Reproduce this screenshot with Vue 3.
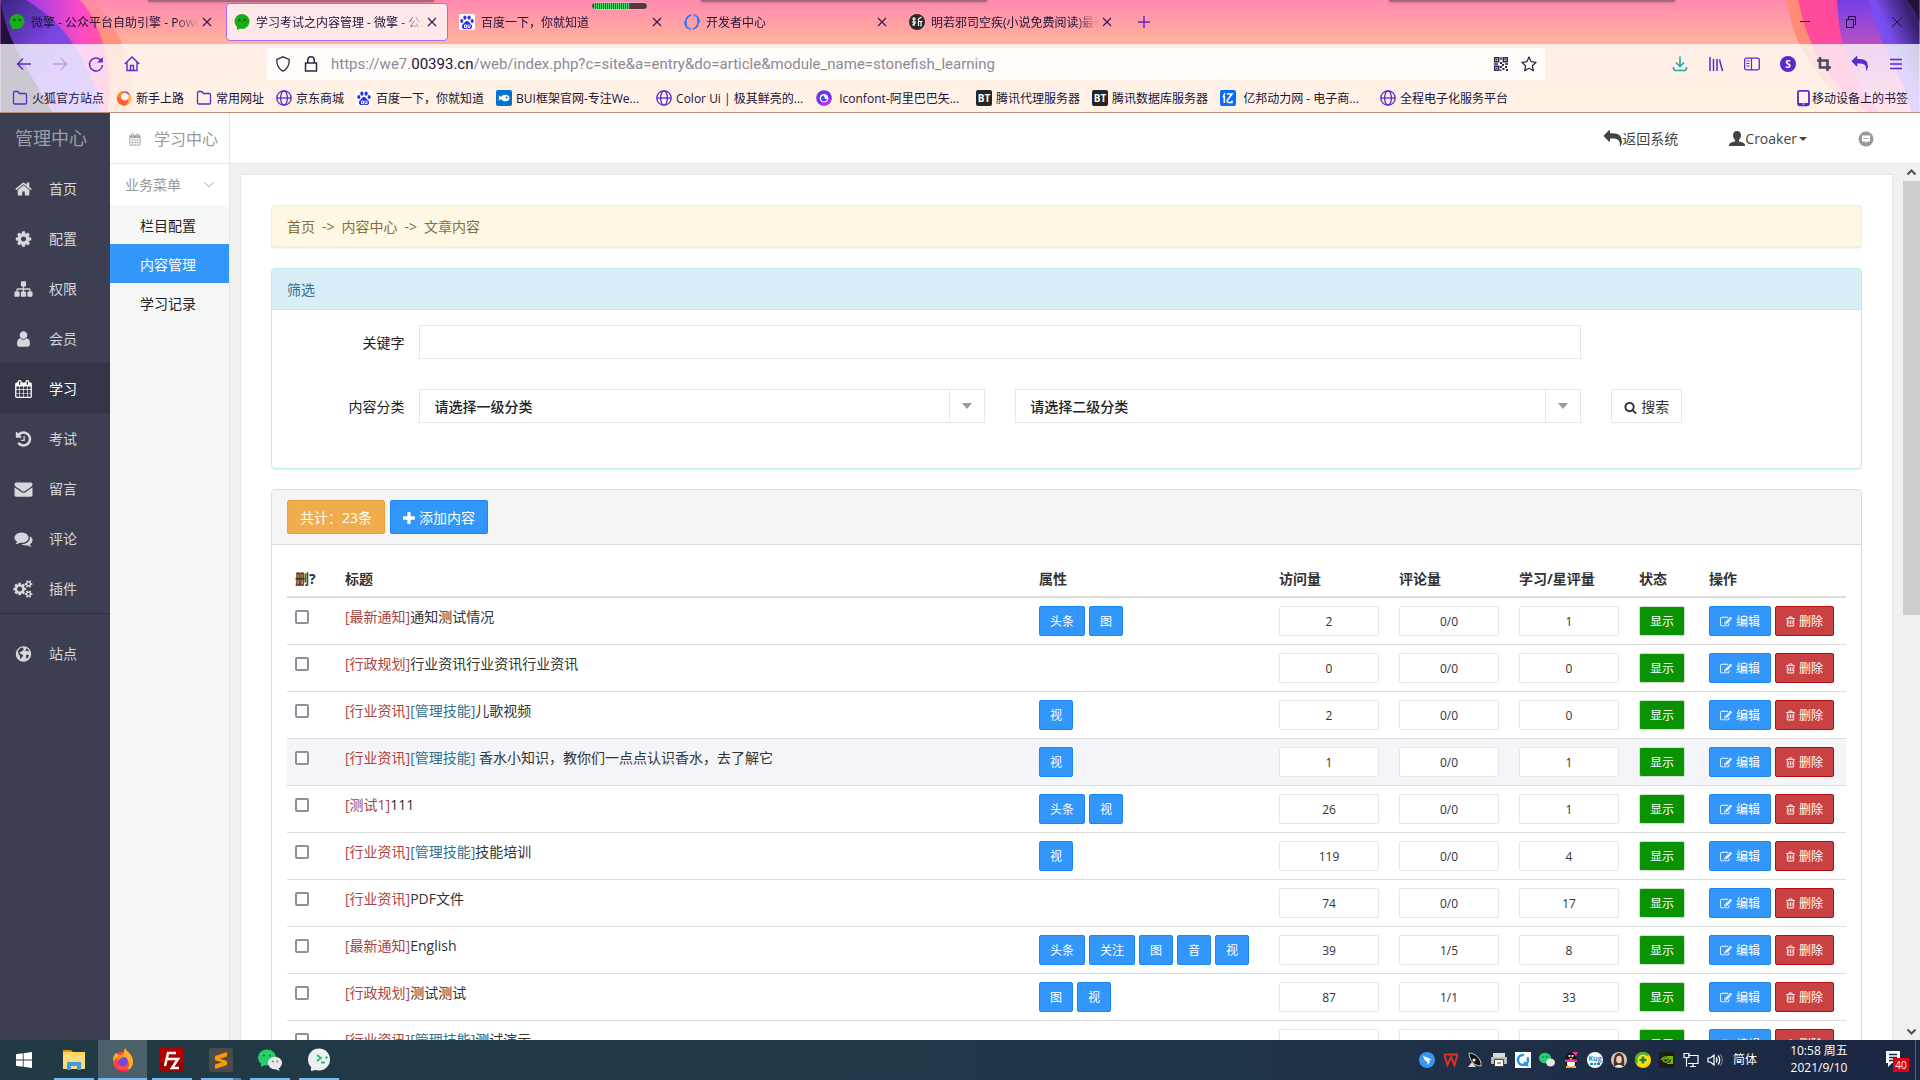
<script setup>
import { ref } from 'vue'

const fa = {
  home: 'M1472 992v480q0 26-19 45t-45 19h-384v-384h-256v384h-384q-26 0-45-19t-19-45v-480q0-1 .5-3t.5-3l575-474 575 474q1 2 1 6zm223-69l-62 74q-8 9-21 11h-3q-13 0-21-7l-692-577-692 577q-12 8-24 7-13-2-21-11l-62-74q-8-10-7-23.5t11-21.5l719-599q32-26 76-26t76 26l244 204v-195q0-14 9-23t23-9h192q14 0 23 9t9 23v408l219 182q10 8 11 21.5t-7 23.5z',
  cog: 'M1152 896q0-106-75-181t-181-75-181 75-75 181 75 181 181 75 181-75 75-181zm512-109v222q0 12-8 23t-20 13l-185 28q-19 54-39 91 35 50 107 138 10 12 10 25t-9 23q-27 37-99 108t-94 71q-12 0-26-9l-138-108q-44 23-91 38-16 136-29 186-7 28-36 28h-222q-14 0-24.5-8.5t-11.5-21.5l-28-184q-49-16-90-37l-141 107q-10 9-25 9-14 0-25-11-126-114-165-168-7-10-7-23 0-12 8-23 15-21 51-66.5t54-70.5q-27-50-41-99l-183-27q-13-2-21-12.5t-8-23.5v-222q0-12 8-23t19-13l186-28q14-46 39-92-40-57-107-138-10-12-10-24 0-10 9-23 26-36 98.5-107.5t94.5-71.5q13 0 26 10l138 107q44-23 91-38 16-136 29-186 7-28 36-28h222q14 0 24.5 8.5t11.5 21.5l28 184q49 16 90 37l142-107q9-9 24-9 13 0 25 10 129 119 165 170 7 8 7 22 0 12-8 23-15 21-51 66.5t-54 70.5q26 50 41 98l183 28q13 2 21 12.5t8 23.5z',
  sitemap: 'M1792 1248v320q0 40-28 68t-68 28h-320q-40 0-68-28t-28-68v-320q0-40 28-68t68-28h96v-192h-512v192h96q40 0 68 28t28 68v320q0 40-28 68t-68 28h-320q-40 0-68-28t-28-68v-320q0-40 28-68t68-28h96v-192h-512v192h96q40 0 68 28t28 68v320q0 40-28 68t-68 28h-320q-40 0-68-28t-28-68v-320q0-40 28-68t68-28h96v-192q0-52 38-90t90-38h512v-192h-96q-40 0-68-28t-28-68v-320q0-40 28-68t68-28h320q40 0 68 28t28 68v320q0 40-28 68t-68 28h-96v192h512q52 0 90 38t38 90v192h96q40 0 68 28t28 68z',
  user: 'M1536 1399q0 109-62.5 187t-150.5 78h-854q-88 0-150.5-78t-62.5-187q0-85 8.5-160.5t31.5-152 58.5-131 94-89 134.5-34.5q131 128 313 128t313-128q76 0 134.5 34.5t94 89 58.5 131 31.5 152 8.5 160.5zm-256-887q0 159-112.5 271.5t-271.5 112.5-271.5-112.5-112.5-271.5 112.5-271.5 271.5-112.5 271.5 112.5 112.5 271.5z',
  calendar: 'M192 1664h288v-288h-288v288zm352 0h320v-288h-320v288zm-352-352h288v-320h-288v320zm352 0h320v-320h-320v320zm-352-384h288v-288h-288v288zm736 736h320v-288h-320v288zm-384-736h320v-288h-320v288zm768 736h288v-288h-288v288zm-384-352h320v-320h-320v320zm-352-864v-288q0-13-9.5-22.5t-22.5-9.5h-64q-13 0-22.5 9.5t-9.5 22.5v288q0 13 9.5 22.5t22.5 9.5h64q13 0 22.5-9.5t9.5-22.5zm736 864h288v-320h-288v320zm-384-384h320v-288h-320v288zm384 0h288v-288h-288v288zm32-480v-288q0-13-9.5-22.5t-22.5-9.5h-64q-13 0-22.5 9.5t-9.5 22.5v288q0 13 9.5 22.5t22.5 9.5h64q13 0 22.5-9.5t9.5-22.5zm384-64v1280q0 52-38 90t-90 38h-1408q-52 0-90-38t-38-90v-1280q0-52 38-90t90-38h128v-96q0-66 47-113t113-47h64q66 0 113 47t47 113v96h384v-96q0-66 47-113t113-47h64q66 0 113 47t47 113v96h128q52 0 90 38t38 90z',
  history: 'M1664 896q0 156-61 298t-164 245-245 164-298 61q-172 0-327-72.5t-264-204.5q-7-10-6.5-22.5t8.5-20.5l137-138q10-9 25-9 16 2 23 12 73 95 179 147t225 52q104 0 198.5-40.5t163.5-109.5 109.5-163.5 40.5-198.5-40.5-198.5-109.5-163.5-163.5-109.5-198.5-40.5q-98 0-188 35.5t-160 101.5l137 138q31 30 14 69-17 40-59 40h-448q-26 0-45-19t-19-45v-448q0-42 40-59 39-17 69 14l130 129q107-101 244.5-156.5t284.5-55.5q156 0 298 61t245 164 164 245 61 298zm-640-288v448q0 14-9 23t-23 9h-320q-14 0-23-9t-9-23v-64q0-14 9-23t23-9h224v-352q0-14 9-23t23-9h64q14 0 23 9t9 23z',
  envelope: 'M1792 710v794q0 66-47 113t-113 47h-1472q-66 0-113-47t-47-113v-794q44 49 101 87 362 246 497 345 57 42 92.5 65.5t94.5 48 110 24.5h2q51 0 110-24.5t94.5-48 92.5-65.5q170-123 498-345 57-39 100-87zm0-294q0 79-49 151t-122 123q-376 261-468 325-10 7-42.5 30.5t-54 38-52 32.5-57.5 27-50 9h-2q-23 0-50-9t-57.5-27-52-32.5-54-38-42.5-30.5q-91-64-262-182.5t-205-142.5q-62-42-117-115.5t-55-136.5q0-78 41.5-130t118.5-52h1472q65 0 112.5 47t47.5 113z',
  comments: 'M1408 768q0 139-94 257t-256.5 186.5-353.5 68.5q-86 0-176-16-124 88-278 128-36 9-86 16h-3q-11 0-20.5-8t-11.5-21q-1-3-1-6.5t.5-6.5 2-6l2.5-5 3.5-5.5 4-5 4.5-5 4-4.5q5-6 23-25t26-29.5 22.5-29 25-38.5 20.5-44q-124-72-195-177t-71-224q0-139 94-257t256.5-186.5 353.5-68.5 353.5 68.5 256.5 186.5 94 257zm384 256q0 120-71 224.5t-195 176.5q10 24 20.5 44t25 38.5 22.5 29 26 29.5 23 25q1 1 4 4.5t4.5 5 4 5 3.5 5.5l2.5 5 2 6 .5 6.5-1 6.5q-3 14-13 22t-22 7q-50-7-86-16-154-40-278-128-90 16-176 16-271 0-472-132 58 4 88 4 161 0 309-45t264-129q125-92 192-212t67-254q0-77-23-152 129 71 204 178t75 230z',
  cogs: 'M832 896q0-106-75-181t-181-75-181 75-75 181 75 181 181 75 181-75 75-181zm768 512q0-52-38-90t-90-38-90 38-38 90q0 53 37.5 90.5t90.5 37.5 90.5-37.5 37.5-90.5zm0-1024q0-52-38-90t-90-38-90 38-38 90q0 53 37.5 90.5t90.5 37.5 90.5-37.5 37.5-90.5zm-384 421v185q0 10-7 19.5t-16 10.5l-155 24q-11 35-32 76 34 48 90 115 7 11 7 20 0 12-7 19-23 30-82.5 89.5t-78.5 59.5q-11 0-21-7l-115-90q-37 19-77 31-11 108-23 155-7 24-30 24h-186q-11 0-20-7.5t-10-17.5l-23-153q-34-10-75-31l-118 89q-7 7-20 7-11 0-21-8-144-133-144-160 0-9 7-19 10-14 41-53t47-61q-23-44-35-82l-152-24q-10-1-17-9.5t-7-19.5v-185q0-10 7-19.5t16-10.5l155-24q11-35 32-76-34-48-90-115-7-11-7-20 0-12 7-20 22-30 82-89t79-59q11 0 21 7l115 90q34-18 77-32 11-108 23-154 7-24 30-24h186q11 0 20 7.5t10 17.5l23 153q34 10 75 31l118-89q8-7 20-7 11 0 21 8 144 133 144 160 0 8-7 19-12 16-42 54t-45 60q23 48 34 82l152 23q10 2 17 10.5t7 19.5zm640 533v140q0 16-149 31-12 27-30 52 51 113 51 138 0 4-4 7-122 71-124 71-8 0-46-47t-52-68q-20 2-30 2t-30-2q-14 21-52 68t-46 47q-2 0-124-71-4-3-4-7 0-25 51-138-18-25-30-52-149-15-149-31v-140q0-16 149-31 13-29 30-52-51-113-51-138 0-4 4-7 4-2 35-20t59-34 30-16q8 0 46 46.5t52 67.5q20-2 30-2t30 2q51-71 92-112l6-2q4 0 124 70 4 3 4 7 0 25-51 138 17 23 30 52 149 15 149 31zm0-1024v140q0 16-149 31-12 27-30 52 51 113 51 138 0 4-4 7-122 71-124 71-8 0-46-47t-52-68q-20 2-30 2t-30-2q-14 21-52 68t-46 47q-2 0-124-71-4-3-4-7 0-25 51-138-18-25-30-52-149-15-149-31v-140q0-16 149-31 13-29 30-52-51-113-51-138 0-4 4-7 4-2 35-20t59-34 30-16q8 0 46 46.5t52 67.5q20-2 30-2t30 2q51-71 92-112l6-2q4 0 124 70 4 3 4 7 0 25-51 138 17 23 30 52 149 15 149 31z',
  globe: 'M896 128a768 768 0 1 0 0 1536a768 768 0 1 0 0-1536zM560 330L760 250L900 290L840 400L940 450L830 560L700 610L620 720L540 690L480 760L560 860L700 900L860 1010L800 1180L700 1250L640 1430L560 1300L520 1060L400 900L340 700L400 480zM1130 300L1330 420L1450 580L1380 640L1260 560L1150 620L1060 540L1180 440zM1130 1010L1300 940L1440 1010L1380 1210L1200 1370L1120 1240L1180 1130z',
  reply: 'M1792 1120q0 166-127 451-3 7-10.5 24t-13.5 30-13 22q-12 17-28 17-15 0-23.5-10t-8.5-25q0-9 2.5-26.5t2.5-23.5q5-68 5-123 0-112-19.5-200.5t-54-153.5-89-112-117-77.5-142-46-158.5-21.5-178-6h-224v256q0 26-19 45t-45 19-45-19l-512-512q-19-19-19-45t19-45l512-512q19-19 45-19t45 19 19 45v256h224q713 0 875 403 53 134 53 333z',
  search: 'M1216 832q0-185-131.5-316.5t-316.5-131.5-316.5 131.5-131.5 316.5 131.5 316.5 316.5 131.5 316.5-131.5 131.5-316.5zm512 832q0 52-38 90t-90 38q-54 0-90-38l-343-342q-179 124-399 124-143 0-273.5-55.5t-225-150-150-225-55.5-273.5 55.5-273.5 150-225 225-150 273.5-55.5 273.5 55.5 225 150 150 225 55.5 273.5q0 220-124 399l343 343q37 37 37 90z',
  plus: 'M1600 736v192q0 40-28 68t-68 28h-416v416q0 40-28 68t-68 28h-192q-40 0-68-28t-28-68v-416h-416q-40 0-68-28t-28-68v-192q0-40 28-68t68-28h416v-416q0-40 28-68t68-28h192q40 0 68 28t28 68v416h416q40 0 68 28t28 68z',
  edit: 'M888 1184l116-116-152-152-116 116v56h96v96h56zm440-720q-16-16-33 1l-350 350q-17 17-1 33t33-1l350-350q17-17 1-33zm80 594v190q0 119-84.5 203.5t-203.5 84.5h-832q-119 0-203.5-84.5t-84.5-203.5v-832q0-119 84.5-203.5t203.5-84.5h832q63 0 117 25 15 7 18 23 3 17-9 29l-49 49q-14 14-32 8-23-6-45-6h-832q-66 0-113 47t-47 113v832q0 66 47 113t113 47h832q66 0 113-47t47-113v-126q0-13 9-22l64-64q15-15 35-7t20 29zm-96-738l288 288-672 672h-288v-288zm444 132l-92 92-288-288 92-92q28-28 68-28t68 28l152 152q28 28 28 68t-28 68z',
  trash: 'M704 736v576q0 14-9 23t-23 9h-64q-14 0-23-9t-9-23v-576q0-14 9-23t23-9h64q14 0 23 9t9 23zm256 0v576q0 14-9 23t-23 9h-64q-14 0-23-9t-9-23v-576q0-14 9-23t23-9h64q14 0 23 9t9 23zm256 0v576q0 14-9 23t-23 9h-64q-14 0-23-9t-9-23v-576q0-14 9-23t23-9h64q14 0 23 9t9 23zm128 724v-948h-896v948q0 22 7 40.5t14.5 27 10.5 8.5h832q3 0 10.5-8.5t14.5-27 7-40.5zm-672-1076h448l-48-117q-7-9-17-11h-317q-10 2-17 11zm928 32v64q0 14-9 23t-23 9h-96v948q0 83-47 143.5t-113 60.5h-832q-66 0-113-58.5t-47-141.5v-952h-96q-14 0-23-9t-9-23v-64q0-14 9-23t23-9h309l70-167q15-37 54-63t79-26h320q40 0 79 26t54 63l70 167h309q14 0 23 9t9 23z',
}

/* 16x16 artwork shared by tabs, bookmarks and the tray */
const art = {
  we7: '<circle cx="8" cy="7.5" r="7.5" fill="#1aad19"/><path d="M3 12l0 4 4-2z" fill="#1aad19"/><circle cx="5.300" cy="6" r="1.300" fill="#0b5d0b"/><circle cx="10.700" cy="6" r="1.300" fill="#0b5d0b"/>',
  baidu: '<rect width="16" height="16" rx="2" fill="#fff"/><g fill="#2a32e0"><ellipse cx="2.800" cy="7" rx="1.600" ry="2.100"/><ellipse cx="5.900" cy="3.600" rx="1.600" ry="2.200"/><ellipse cx="10.100" cy="3.600" rx="1.600" ry="2.200"/><ellipse cx="13.200" cy="7" rx="1.600" ry="2.100"/><path d="M8 7c2 0 2.700 2 4 3.200 2 2 1.200 4.800-1.200 4.800-1.200 0-1.800-.3-2.800-.3s-1.600.3-2.800.3c-2.400 0-3.200-2.800-1.200-4.800C5.300 9 6 7 8 7z"/></g><path d="M5.500 11h2v2.500h-2zM9 10.500v3h2v-3" fill="none" stroke="#fff"/>',
  dev: '<g fill="none" stroke="#2f6bff" stroke-width="1.500"><path d="M7 1C2 2.500 1 7 2.500 11.500"/><path d="M9 15c5-1.500 6-6 4.500-10.500"/><path d="M9 1c4.500 0 6.500 4 6 8"/><path d="M7 15c-4.500 0-6.500-4-6-8"/><path d="M4 13c1 1 2 1.500 3.500 1.500M12 3c-1-1-2-1.500-3.500-1.500" stroke="#6f9bff"/></g>',
  novel: '<circle cx="8" cy="8" r="8" fill="#2b2b2b"/><path d="M3 5h4M5 3v9M3 8h4M3.500 11l3-2M12.500 3l-3 2v7M9.500 7.500h4M12 7.500v5" stroke="#fff" fill="none" stroke-width="1.200"/>',
  folder: '<path d="M1.500 3c0-.8.5-1.500 1.300-1.500h3L7.500 3.500h5.700c.8 0 1.300.6 1.300 1.300v7.900c0 .8-.5 1.300-1.300 1.300H2.800c-.8 0-1.300-.5-1.300-1.300z" fill="none" stroke="#592acb" stroke-width="1.300"/>',
  firefox: '<circle cx="8" cy="8.500" r="7.200" fill="#ff5a36"/><path d="M8 1.500a7 7 0 0 1 7 7c0 3-2 6-5 6.700 2-2 3-5 2-8C11 4 9 3 8 1.500z" fill="#ffb52e"/><path d="M1 6C2 3 5 1 8 1.500 5 3 4 6 5 9z" fill="#ff8a2a"/><circle cx="8.800" cy="6.800" r="3.800" fill="#fff3e8"/><path d="M9 1a7 7 0 0 1 5 4c-2-1-4-1-5-4z" fill="#8a4bd6"/>',
  globe: '<g fill="none" stroke="#592acb" stroke-width="1.300"><circle cx="8" cy="8" r="7.200"/><ellipse cx="8" cy="8" rx="3.400" ry="7.200"/><path d="M.8 8h14.400"/></g>',
  bui: '<rect width="16" height="16" rx="2" fill="#0273d0"/><path d="M2.500 5.500c1 .3 2 1 2.500 1.500 1-1.500 2.500-2.300 4.500-2.300 2.500 0 4 1.300 4 3.300s-1.500 3.300-4 3.300C7.500 11.300 6 10.500 5 9c-.5.500-1.500 1.200-2.500 1.500.6-1.700.6-3.300 0-5z" fill="#fff"/><circle cx="10.500" cy="7.500" r="1" fill="#0273d0"/>',
  iconfont: '<circle cx="8" cy="8" r="7.800" fill="#6a35f0"/><path d="M15.500 9A7.800 7.800 0 0 1 2 13c4 1 8-1 8-5z" fill="#c228f5"/><circle cx="8" cy="8.300" r="4.300" fill="#fff"/><path d="M8 5.500a3 3 0 1 0 3 3L9 9z" fill="#4b4bf5"/>',
  bt: '<rect width="16" height="16" rx="2" fill="#262626"/><text x="8" y="12" font-family="Open Sans, sans-serif" font-size="10" font-weight="700" text-anchor="middle" fill="#fff">BT</text>',
  yi: '<rect width="16" height="16" rx="2" fill="#0a6cff"/><path d="M5 3L3 7.500M4.300 6v7M7 4h5L7.500 10c-1 1.500 0 2.500 1.500 2.500h3v-2" fill="none" stroke="#fff" stroke-width="1.600"/>',
  phone: '<rect x="2" y=".8" width="11" height="14.500" rx="1.500" fill="none" stroke="#592acb" stroke-width="1.800"/><path d="M2 13h11v2H2z" fill="#592acb"/><path d="M6.500 14h2" stroke="#fff"/>',
}

const tabs = [
  { icon: 'we7', title: '微擎 - 公众平台自助引擎 - Powe' },
  { icon: 'we7', title: '学习考试之内容管理 - 微擎 - 公众' },
  { icon: 'baidu', title: '百度一下，你就知道' },
  { icon: 'dev', title: '开发者中心' },
  { icon: 'novel', title: '明若邪司空疾(小说免费阅读)最新' },
]

const bookmarks = [
  { icon: 'folder', title: '火狐官方站点' },
  { icon: 'firefox', title: '新手上路' },
  { icon: 'folder', title: '常用网址' },
  { icon: 'globe', title: '京东商城' },
  { icon: 'baidu', title: '百度一下，你就知道' },
  { icon: 'bui', title: 'BUI框架官网-专注We...', long: true },
  { icon: 'globe', title: 'Color Ui | 极其鲜亮的...', long: true },
  { icon: 'iconfont', title: '\u00a0Iconfont-阿里巴巴矢...', long: true },
  { icon: 'bt', title: '腾讯代理服务器' },
  { icon: 'bt', title: '腾讯数据库服务器' },
  { icon: 'yi', title: '\u00a0亿邦动力网 - 电子商...', long: true },
  { icon: 'globe', title: '全程电子化服务平台' },
]

const menu = [
  { icon: 'home', name: '首页' },
  { icon: 'cog', name: '配置' },
  { icon: 'sitemap', name: '权限' },
  { icon: 'user', name: '会员' },
  { icon: 'calendar', name: '学习', active: true },
  { icon: 'history', name: '考试' },
  { icon: 'envelope', name: '留言' },
  { icon: 'comments', name: '评论' },
  { icon: 'cogs', name: '插件', box: '0 0 1920 1792' },
]

const submenu = [
  { name: '栏目配置' },
  { name: '内容管理', active: true },
  { name: '学习记录' },
]

const rows = ref([
  { cat: '[最新通知]', title: '通知测试情况', tags: ['头条', '图'], n: ['2', '0/0', '1'] },
  { cat: '[行政规划]', title: '行业资讯行业资讯行业资讯', tags: [], n: ['0', '0/0', '0'] },
  { cat: '[行业资讯]', sub: '[管理技能]', title: '儿歌视频', tags: ['视'], n: ['2', '0/0', '0'] },
  { cat: '[行业资讯]', sub: '[管理技能]', title: ' 香水小知识，教你们一点点认识香水，去了解它', tags: ['视'], n: ['1', '0/0', '1'], hover: true },
  { cat: '[测试1]', title: '111', tags: ['头条', '视'], n: ['26', '0/0', '1'] },
  { cat: '[行业资讯]', sub: '[管理技能]', title: '技能培训', tags: ['视'], n: ['119', '0/0', '4'] },
  { cat: '[行业资讯]', title: 'PDF文件', tags: [], n: ['74', '0/0', '17'] },
  { cat: '[最新通知]', title: 'English', tags: ['头条', '关注', '图', '音', '视'], n: ['39', '1/5', '8'] },
  { cat: '[行政规划]', title: '测试测试', tags: ['图', '视'], n: ['87', '1/1', '33'] },
  { cat: '[行业资讯]', sub: '[管理技能]', title: '测试演示', tags: [], n: ['', '', ''] },
])

const apps = [
  { name: '文件资源管理器', svg: '<path d="M1 2h8l2 2H1z" fill="#e09a12"/><path d="M1 4h22v17H1z" fill="#ffd35c"/><path d="M1 7h22v14H1z" fill="#fcdc7c"/><path d="M5 22v-8h14v8h-4v-4H9v4z" fill="#3d9be6"/>' },
  { name: 'Firefox', active: true, svg: '<circle cx="12" cy="13.500" r="10" fill="#ff4a3d"/><path d="M2 13C2 8 4 5 6 5c0 1.500 1 2 2 2.500C10 7 12 7 13 5c0-2 0-3 1-5 2 4 8 6 8 14 0 5-4 9-8 9.500C18 21 19 17 17 13c-1-3-3-4-6-4-4 0-7 2-9 4z" fill="#ffb01f"/><circle cx="12" cy="13.500" r="4.800" fill="#7542e5"/><path d="M5 9c2-1 5-1 7 1-2 0-4 1-4 3-1-1-2-3-3-4z" fill="#ff8a16"/><path d="M3 17c3 6 11 7 16 3-3 5-12 6-16-3z" fill="#f5156c"/>' },
  { name: 'FileZilla', svg: '<rect width="24" height="24" fill="#b40000"/><path d="M0 14h24v10H0z" fill="#960000"/><path d="M5 18L8 5h8M7 11h5" fill="none" stroke="#fff" stroke-width="2.500"/><path d="M11 11h7l-6 9h7" fill="none" stroke="#fff" stroke-width="2.500"/>' },
  { name: 'Sublime Text', stacked: true, svg: '<rect width="24" height="24" rx="2" fill="#4b4b4b"/><path d="M6 8l12-4v4.500l-7 2.300 7 2.200V17L6 21v-4.500l7-2.300-7-2z" fill="#ff9800"/>' },
  { name: '微信', svg: '<ellipse cx="9" cy="9.500" rx="9" ry="8" fill="#24d06b"/><path d="M3 15l0 4 4-2z" fill="#24d06b"/><circle cx="6" cy="7.500" r="1.100" fill="#156b3a"/><circle cx="12" cy="7.500" r="1.100" fill="#156b3a"/><ellipse cx="17" cy="15" rx="7" ry="6.300" fill="#e9e9e9"/><path d="M20 20l2 3-5-2z" fill="#e9e9e9"/><circle cx="14.700" cy="13.500" r=".9" fill="#777"/><circle cx="19.300" cy="13.500" r=".9" fill="#777"/>' },
  { name: '微信开发者工具', svg: '<circle cx="12" cy="11.500" r="11" fill="#efefef"/><path d="M4 19l0 4 5-1z" fill="#efefef"/><path d="M10 7l4 3-4 3M14 14.500h4" fill="none" stroke="#1fbf75" stroke-width="1.800"/><circle cx="19.500" cy="9.500" r="1.200" fill="#1fbf75"/>' },
]

const tray = [
  '<circle cx="8" cy="8" r="8" fill="#3a94f2"/><path d="M4 4l9 3.500-3 .5 1 2-3 3 .5-3C6 9 5 7 4 4z" fill="#fff"/>',
  '<path d="M1 2.500h14M1.500 3l3 10L8 5l3.500 8 3-10" fill="none" stroke="#e0301e" stroke-width="2"/>',
  '<path d="M2 1c6 0 13 6 12 13C7 14 2 8 2 1z" fill="#111" stroke="#ccc"/><path d="M1 15l4-5 4 5z" fill="#ddd"/><circle cx="7" cy="8" r="1.500" fill="#fff"/>',
  '<path d="M2 1h12v4H2z" fill="#ddd"/><path d="M0 5h16v7H0z" fill="#bbb"/><path d="M3.500 7.500h9v7h-9z" fill="#fff" stroke="#444"/><path d="M6 11h4" stroke="#444"/>',
  '<rect width="16" height="16" fill="#fff"/><circle cx="8" cy="8" r="5" fill="none" stroke="#2990e8" stroke-width="2.500" stroke-dasharray="24 4"/><path d="M9 10l4 4" stroke="#2990e8" stroke-width="2"/>',
  '<ellipse cx="6" cy="6" rx="6" ry="5.300" fill="#2ad06c"/><circle cx="4" cy="5" r=".8" fill="#145"/><circle cx="8" cy="5" r=".8" fill="#145"/><ellipse cx="11.500" cy="10.500" rx="4.500" ry="4" fill="#e6e6e6"/>',
  '<ellipse cx="8" cy="9" rx="6" ry="6.500" fill="#111"/><circle cx="8" cy="4.500" r="4" fill="#111"/><ellipse cx="8" cy="11.500" rx="4" ry="4" fill="#fff"/><circle cx="6.500" cy="4" r="1.100" fill="#fff"/><circle cx="9.500" cy="4" r="1.100" fill="#fff"/><path d="M2 7.500h12v2.500H2z" fill="#ff2fa0"/><path d="M6 6h4l-2 1.500z" fill="#ffb400"/><path d="M9 0l6 0-2 4z" fill="#ff2fa0"/><path d="M3 15h4M9 15h4" stroke="#ffb400" stroke-width="2"/>',
  '<circle cx="8" cy="8" r="8" fill="#fff"/><text x="8" y="9" font-family="Open Sans, sans-serif" font-size="7" font-weight="700" text-anchor="middle" fill="#138bb8">Kug</text><path d="M3 12h3M7 12h2M10 12h3" stroke="#138bb8" stroke-width="2"/>',
  '<circle cx="8" cy="8" r="8" fill="#d8c9bd"/><path d="M3 14C2 6 4 1 8 1s6 5 5 13z" fill="#4a3328"/><ellipse cx="8" cy="7.500" rx="2.800" ry="3.800" fill="#f1cdb8"/><path d="M4 15c1-3 7-3 8 0z" fill="#eee"/>',
  '<circle cx="8" cy="8" r="8" fill="#ffd400"/><path d="M8 0a8 8 0 0 0-7 12L14 3A8 8 0 0 0 8 0z" fill="#4caf28"/><circle cx="8" cy="8" r="5.500" fill="#ffe01a"/><path d="M8 4.500v7M4.500 8h7" stroke="#18892a" stroke-width="2.500"/>',
  '<rect width="16" height="16" fill="#1d1d1d"/><path d="M2 8c2-4 6-4 9-1-2 4-6 4-7 1 1-2 4-2 5 0" fill="none" stroke="#76b900" stroke-width="1.300"/><path d="M8 4h6v8H8v-1c3 0 4-2 4-3s-2-3-4-3z" fill="#76b900"/>',
  '<path d="M5 3.500h10v8H5M10 11.500v3M7 14.500h6M1 1.500h5v4H1zM3.500 5.500v9" fill="none" stroke="#fff" stroke-width="1.200"/>',
  '<path d="M1 6h2.500L7 3v10l-3.500-3H1zM9 5.500c1.300 1.500 1.300 3.500 0 5M11 3.500c2.300 2.500 2.300 6.500 0 9" fill="none" stroke="#fff" stroke-width="1.200"/><path d="M13 2c3 3.500 3 8.500 0 12" fill="none" stroke="#8a93a5"/>',
]
</script>

<template>
  <div class="screen">
    <header class="browser">
      <svg class="theme left" viewBox="0 0 140 113" aria-hidden="true">
        <defs>
          <linearGradient id="lo" x1="0" y1="0" x2="0" y2="1"><stop offset="0" stop-color="#ff8aa6" /><stop offset=".4" stop-color="#ff9478" /><stop offset="1" stop-color="#ffb37c" /></linearGradient>
          <linearGradient id="lp" x1="0" y1="0" x2="1" y2="1"><stop offset="0" stop-color="#3b2380" /><stop offset=".4" stop-color="#7a44e0" /><stop offset="1" stop-color="#9059ff" /></linearGradient>
          <linearGradient id="lm" x1="0" y1="0" x2="1" y2="0"><stop offset=".3" stop-color="#a93ee6" /><stop offset=".75" stop-color="#ff4ac2" /><stop offset="1" stop-color="#ff5c98" /></linearGradient>
        </defs>
        <path d="M0 0H92C118 22 138 70 134 113H0Z" fill="url(#lo)" />
        <path d="M0 0H80C100 20 116 70 108 113H0Z" fill="url(#lm)" />
        <path d="M0 0H26C50 15 66 32 74 46C88 68 98 88 101 113H0Z" fill="url(#lp)" />
        <path d="M0 0C4 40 32 76 52 113H0Z" fill="#20123a" />
      </svg>
      <svg class="theme right" viewBox="0 0 150 113" aria-hidden="true">
        <defs>
          <linearGradient id="rp" x1="0" y1="0" x2="0" y2="1"><stop offset="0" stop-color="#7440e6" /><stop offset=".4" stop-color="#b94fc4" /><stop offset="1" stop-color="#ff8ab0" /></linearGradient>
          <linearGradient id="rv" x1="0" y1="1" x2="1" y2="0"><stop offset="0" stop-color="#9059ff" /><stop offset=".55" stop-color="#7a4df0" /><stop offset=".85" stop-color="#35206b" /></linearGradient>
        </defs>
        <path d="M16 0C22 46 50 86 88 113H150V0Z" fill="#ff8a78" />
        <path d="M28 0C36 46 60 86 98 113H150V0Z" fill="#ff4a9c" />
        <path d="M67 0C68 46 84 84 110 113H150V0Z" fill="url(#rp)" />
        <path d="M99 0C108 46 132 70 142 113H150V0Z" fill="url(#rv)" />
        <path d="M138 0C144 8 148 14 150 22V0Z" fill="#20123a" />
      </svg>
      <i class="edge e1"></i><i class="edge e2"></i><i class="edge e3"></i>
      <div class="meter"></div>

      <nav class="tabs">
        <div v-for="(t, i) in tabs" :key="t.title" class="tab" :class="{ active: i === 1 }">
          <svg class="s16" viewBox="0 0 16 16" v-html="art[t.icon]"></svg>
          <span class="tab-title">{{ t.title }}</span>
          <button class="plain" aria-label="关闭标签页"><svg class="s16" viewBox="0 0 16 16"><path d="M4 4l8 8M12 4l-8 8" stroke="#3a1a55" stroke-width="1.200" /></svg></button>
        </div>
        <button class="plain new-tab" aria-label="新建标签页"><svg class="s16" viewBox="0 0 16 16"><path d="M8 2v12M2 8h12" stroke="#592acb" stroke-width="1.400" /></svg></button>
        <div class="win">
          <button class="plain" aria-label="最小化"><svg class="s16" viewBox="0 0 16 16"><path d="M3 7.500h10" stroke="#20123a" /></svg></button>
          <button class="plain" aria-label="还原"><svg class="s16" viewBox="0 0 16 16"><path d="M3.500 5.500h7v8h-7zM5.500 5.500v-3h7v8h-2" fill="none" stroke="#20123a" /></svg></button>
          <button class="plain" aria-label="关闭"><svg class="s16" viewBox="0 0 16 16"><path d="M3 3l10 10M13 3L3 13" stroke="#20123a" /></svg></button>
        </div>
      </nav>

      <div class="chrome">
        <div class="toolbar">
          <div class="nav-btns">
            <button class="plain" aria-label="后退"><svg class="s16" viewBox="0 0 16 16"><path d="M15 8H1.500M7 2.500L1.500 8 7 13.500" fill="none" stroke="#592acb" stroke-width="1.400" /></svg></button>
            <button class="plain" aria-label="前进"><svg class="s16" viewBox="0 0 16 16"><path d="M1 8h13.500M9 2.500L14.500 8 9 13.500" fill="none" stroke="#bb9fe6" stroke-width="1.400" /></svg></button>
            <button class="plain" aria-label="刷新"><svg class="s16" viewBox="0 0 16 16"><path d="M13.500 5A6.500 6.500 0 1 0 14.500 9" fill="none" stroke="#592acb" stroke-width="1.500" /><path d="M14.800 1v5.500H9z" fill="#592acb" /></svg></button>
            <button class="plain" aria-label="主页"><svg class="s16" viewBox="0 0 16 16"><path d="M.8 8L8 1l7.200 7M3 6.500v8h10v-8M6.500 14v-4.500h3V14" fill="none" stroke="#592acb" stroke-width="1.400" /></svg></button>
          </div>
          <div class="url">
            <svg class="s16" viewBox="0 0 16 16"><path d="M8 .8l6.200 2.600c.3 5-1.800 9.500-6.200 11.800C3.600 12.900 1.500 8.400 1.800 3.400z" fill="none" stroke="#33274d" stroke-width="1.300" /></svg>
            <svg class="s16" viewBox="0 0 16 16"><path d="M2.500 7h11v8h-11zM4.800 7V4a3.200 3.200 0 0 1 6.400 0v3" fill="none" stroke="#33274d" stroke-width="1.500" /></svg>
            <p class="address">https://we7.<b>00393.cn</b>/web/index.php?c=site&amp;a=entry&amp;do=article&amp;module_name=stonefish_learning</p>
            <svg class="s16" viewBox="0 0 16 16"><path d="M1.700 1.700h4v4h-4zM10.300 1.700h4v4h-4zM1.700 10.300h4v4h-4z" fill="none" stroke="#33274d" stroke-width="1.500" /><path d="M3 3h1.500v1.500H3zM11.500 3H13v1.500h-1.500zM3 11.500h1.500V13H3zM7.300 1h1.400v3H7.300zM7 6h2v2H7zM1 7.300h4v1.400H1zM9 8h2v2H9zM12 7.300h3v1.400h-3zM7 10h2v2H7zM9.500 12h2v2h-2zM12 10h2v2h-2zM13 13h2v2h-2zM7 13.500h1.500V15H7z" fill="#33274d" /></svg>
            <svg class="s16" viewBox="0 0 16 16"><path d="M8 1l2.100 4.700 5 .6-3.700 3.500 1 5L8 12.300l-4.400 2.500 1-5L.9 6.300l5-.6z" fill="none" stroke="#33274d" stroke-width="1.300" stroke-linejoin="round" /></svg>
          </div>
          <div class="ext-btns">
            <button class="plain" aria-label="下载"><svg class="s16" viewBox="0 0 16 16"><path d="M8 .5v10M4 6.500l4 4 4-4" fill="none" stroke="#17a8a3" stroke-width="1.500" /><path d="M1.500 11v1.500c0 1 .8 2 2 2h9c1.200 0 2-1 2-2V11" fill="none" stroke="#17a8a3" stroke-width="1.500" /></svg></button>
            <button class="plain" aria-label="书架"><svg class="s16" viewBox="0 0 16 16"><path d="M2 1v14M5.500 3v12M9 3v12M11.500 3.500l3 11.500" stroke="#592acb" stroke-width="1.500" /></svg></button>
            <button class="plain" aria-label="侧边栏"><svg class="s16" viewBox="0 0 16 16"><rect x=".7" y="2.200" width="14.600" height="11.600" rx="1.500" fill="none" stroke="#592acb" stroke-width="1.300" /><path d="M7.500 2v12M2.500 5h3M2.500 7.500h3M2.500 10h3" stroke="#592acb" stroke-width="1.200" /></svg></button>
            <button class="plain" aria-label="账户"><span class="account">S</span></button>
            <button class="plain" aria-label="截图"><svg class="s16" viewBox="0 0 16 16"><path d="M4 1v10.500h11M1 4.500h10.500V15" fill="none" stroke="#4d4a60" stroke-width="2.600" /></svg></button>
            <button class="plain" aria-label="撤销"><svg class="s16" viewBox="0 0 1792 1792"><path :d="fa.reply" fill="#592acb" /></svg></button>
            <button class="plain" aria-label="菜单"><svg class="s16" viewBox="0 0 16 16"><path d="M2 3.500h12M2 8h12M2 12.500h12" stroke="#592acb" stroke-width="1.300" /></svg></button>
          </div>
        </div>
        <div class="bookmarks">
          <a v-for="b in bookmarks" :key="b.title" href="#" class="bookmark" :class="{ long: b.long }">
            <svg class="s16" viewBox="0 0 16 16" v-html="art[b.icon]"></svg><span>{{ b.title }}</span>
          </a>
          <a href="#" class="bookmark mobile"><svg class="s16" viewBox="0 0 16 16" v-html="art.phone"></svg><span>移动设备上的书签</span></a>
        </div>
      </div>
    </header>

    <div class="app">
      <aside class="side">
        <h1 class="brand">管理中心</h1>
        <a v-for="m in menu" :key="m.name" href="#" class="side-item" :class="{ active: m.active }">
          <svg class="fa" :viewBox="m.box || '0 0 1792 1792'"><path :d="fa[m.icon]" /></svg>{{ m.name }}
        </a>
        <div class="side-foot">
          <a href="#" class="side-item"><svg class="fa" viewBox="0 0 1792 1792"><path :d="fa.globe" fill-rule="evenodd" /></svg>站点</a>
        </div>
      </aside>

      <aside class="sub">
        <h2 class="sub-title"><svg class="cal" viewBox="0 0 1792 1792"><path :d="fa.calendar" /></svg>学习中心</h2>
        <button class="sub-group">业务菜单<svg class="chev" viewBox="0 0 10 6"><path d="M.5.5L5 5 9.500.5" fill="none" stroke="#aaa" /></svg></button>
        <a v-for="s in submenu" :key="s.name" href="#" class="sub-item" :class="{ active: s.active }">{{ s.name }}</a>
      </aside>

      <div class="work">
        <div class="topbar">
          <a href="#" class="top-link"><svg class="ic18" viewBox="0 0 1792 1792"><path :d="fa.reply" /></svg>返回系统</a>
          <a href="#" class="top-link"><svg class="s16" viewBox="0 0 16 16"><path d="M8 0c2.600 0 4 1.700 4 4.200 0 2-.8 3.500-2 4.600v1.600c2.500.6 5.500 1.300 6 3V15H0v-1.600c.5-1.700 3.500-2.400 6-3V8.800C4.800 7.700 4 6.200 4 4.200 4 1.700 5.400 0 8 0z" /></svg>Croaker<i class="caret"></i></a>
          <button class="plain" aria-label="消息"><svg class="s16" viewBox="0 0 16 16"><circle cx="8" cy="8" r="7.500" fill="#999" /><path d="M4 4.500h8v6H9l-1 1.500-1-1.500H4z" fill="#fff" /><path d="M5.500 7.500h5" stroke="#999" stroke-dasharray="1.500 .4" /></svg></button>
        </div>

        <div class="scroll">
          <main class="page">
            <p class="crumb"><span>首页</span><span>-&gt;</span><span>内容中心</span><span>-&gt;</span><span>文章内容</span></p>

            <section class="panel info">
              <h3 class="panel-head">筛选</h3>
              <form class="filter" @submit.prevent>
                <label for="kw">关键字</label>
                <div class="cell wide"><input id="kw" type="text" class="field" /></div>
                <label for="c1" class="row2">内容分类</label>
                <div class="cell row2">
                  <div class="pick"><select id="c1" class="field"><option>请选择一级分类</option></select><span class="arrow"></span></div>
                </div>
                <div class="cell row2">
                  <div class="pick"><select aria-label="二级分类" class="field"><option>请选择二级分类</option></select><span class="arrow"></span></div>
                </div>
                <div class="cell row2"><button class="btn white"><svg class="ic13" viewBox="0 0 1792 1792"><path :d="fa.search" /></svg>搜索</button></div>
              </form>
            </section>

            <section class="panel">
              <div class="panel-head bar">
                <button class="btn orange">共计：23条</button>
                <button class="btn blue"><svg class="ic12" viewBox="192 128 1408 1408"><path :d="fa.plus" /></svg>添加内容</button>
              </div>
              <div class="panel-body">
                <table>
                  <colgroup><col class="w50" /><col /><col class="w240" /><col class="w120" /><col class="w120" /><col class="w120" /><col class="w70" /><col class="w145" /></colgroup>
                  <thead>
                    <tr><th>删?</th><th>标题</th><th>属性</th><th>访问量</th><th>评论量</th><th>学习/星评量</th><th>状态</th><th>操作</th></tr>
                  </thead>
                  <tbody>
                    <tr v-for="(r, i) in rows" :key="i" :class="{ hover: r.hover }">
                      <td><input type="checkbox" class="tick" :aria-label="r.title" /></td>
                      <td class="title"><span class="cat">{{ r.cat }}</span><span v-if="r.sub" class="subcat">{{ r.sub }}</span>{{ r.title }}</td>
                      <td><div class="group"><button v-for="t in r.tags" :key="t" class="btn small blue">{{ t }}</button></div></td>
                      <td v-for="(v, k) in r.n" :key="k"><button class="btn small count">{{ v }}</button></td>
                      <td><button class="btn small green">显示</button></td>
                      <td>
                        <div class="group">
                          <button class="btn small blue"><svg class="ic12" viewBox="0 0 1792 1792"><path :d="fa.edit" /></svg>编辑</button>
                          <button class="btn small red"><svg class="ic9" viewBox="192 128 1408 1536"><path :d="fa.trash" /></svg>删除</button>
                        </div>
                      </td>
                    </tr>
                  </tbody>
                </table>
              </div>
            </section>
          </main>
          <div class="scrollbar">
            <svg class="sb-arrow" viewBox="0 0 17 17"><path d="M4.500 10.500l4-4 4 4" fill="none" stroke="#505050" stroke-width="2" /></svg>
            <div class="track"><div class="thumb"></div></div>
            <svg class="sb-arrow" viewBox="0 0 17 17"><path d="M4.500 6.500l4 4 4-4" fill="none" stroke="#505050" stroke-width="2" /></svg>
          </div>
        </div>
      </div>
    </div>

    <footer class="taskbar">
      <button class="plain task start" aria-label="开始"><svg class="s16" viewBox="0 0 16 16"><path d="M0 2.300L6.800 1.300v6.200H0zM7.600 1.200L16 0v7.500H7.600zM0 8.400h6.800v6.300L0 13.700zM7.600 8.400H16V16l-8.400-1.200z" fill="#fff" /></svg></button>
      <button v-for="a in apps" :key="a.name" class="plain task" :class="{ active: a.active, stacked: a.stacked }" :aria-label="a.name"><svg class="s24" viewBox="0 0 24 24" v-html="a.svg"></svg></button>
      <div class="tray">
        <svg v-for="(t, i) in tray" :key="i" class="s16" viewBox="0 0 16 16" v-html="t"></svg>
        <span class="ime">简体</span>
        <time class="clock">10:58 周五<br />2021/9/10</time>
        <div class="notice"><svg class="s20" viewBox="0 0 20 20"><path d="M1 1h14v12H7l-4 4v-4H1z" fill="#fff" /><path d="M4 4.500h8M4 7.500h8M4 10.500h4" stroke="#1b2843" stroke-width="1.300" /></svg><span class="badge">40</span></div>
        <i class="desk"></i>
      </div>
    </footer>
  </div>
</template>

<style>
body {
  background: #f0f0f1;
}
</style>

<style scoped>
* {
  box-sizing: border-box;
}
.screen {
  display: flex;
  flex-direction: column;
  height: 100vh;
  overflow: hidden;
  font: 14px/20px 'Open Sans', 'Noto Sans CJK SC', sans-serif;
  color: #333;
}
button,
input,
select {
  font: inherit;
  color: inherit;
  margin: 0;
}
a {
  color: inherit;
  text-decoration: none;
}
h1,
h2,
h3,
p {
  margin: 0;
  font-weight: 400;
}
.plain {
  display: flex;
  align-items: center;
  justify-content: center;
  padding: 0;
  border: 0;
  background: none;
}
svg {
  display: block;
  flex: none;
  overflow: visible;
}
.s16 { width: 16px; height: 16px; }
.s20 { width: 20px; height: 20px; }
.s24 { width: 24px; height: 24px; }
.ic9 { width: 9px; height: 11px; fill: currentColor; }
.ic12 { width: 12px; height: 12px; fill: currentColor; }
.ic13 { width: 13px; height: 13px; fill: currentColor; }
.ic18 { width: 18px; height: 18px; fill: currentColor; }

/* browser window */
.browser {
  position: relative;
  flex: none;
  background: linear-gradient(#ff8aae, #ffb39c 44px, #ffc88f 112px);
  font-size: 12px;
  color: #20123a;
  border-bottom: 1px solid #b98c7c;
}
.theme {
  position: absolute;
  top: 0;
  height: 112px;
}
.theme.left { left: 0; width: 140px; }
.theme.right { right: 0; width: 150px; }
.edge {
  position: absolute;
  top: 0;
  width: 286px;
  height: 2px;
  background: #a9667f;
  box-shadow: 0 0 3px #a9667f;
}
.e1 { left: 148px; }
.e2 { left: 701px; }
.e3 { left: 1389px; }
.meter {
  position: absolute;
  z-index: 2;
  top: 2px;
  left: 591px;
  width: 57px;
  height: 8px;
  border: 1px solid #e9b3bd;
  border-radius: 4px;
  background: repeating-linear-gradient(90deg, #4fd36b 0 1px, #2c6a3c 1px 2px) 2px 0 / 36px 6px no-repeat #5a3443;
}
.tabs {
  position: relative;
  display: flex;
  align-items: center;
  gap: 3px;
  height: 44px;
  padding-left: 1px;
}
.tab {
  display: flex;
  align-items: center;
  width: 222px;
  height: 38px;
  padding: 0 7px;
  border: 1px solid transparent;
  border-radius: 4px;
}
.tab.active {
  background: #ffe8ea;
  border-color: #a66cf2;
}
.tab-title {
  flex: 1;
  min-width: 0;
  margin-left: 6px;
  padding-top: 2px;
  overflow: hidden;
  white-space: nowrap;
  mask-image: linear-gradient(90deg, #000 calc(100% - 24px), transparent);
}
.new-tab {
  width: 36px;
  height: 32px;
}
.win {
  display: flex;
  margin-left: auto;
}
.win .plain {
  width: 46px;
  height: 44px;
}
.chrome {
  position: relative;
  background: rgba(255, 255, 255, 0.77);
}
.toolbar {
  display: flex;
  align-items: center;
  padding: 4px 6px;
}
.nav-btns,
.ext-btns {
  display: flex;
  flex: none;
}
.nav-btns {
  width: 261px;
}
.nav-btns .plain,
.ext-btns .plain {
  width: 36px;
  height: 32px;
}
.url {
  display: flex;
  align-items: center;
  flex: 1;
  gap: 12px;
  height: 32px;
  padding: 0 8px;
  border-radius: 4px;
  background: #fffcfa;
}
.address {
  flex: 1;
  font-family: Roboto, 'Open Sans', sans-serif;
  font-size: 15px;
  color: #8f889a;
  white-space: nowrap;
  overflow: hidden;
}
.address b {
  font-weight: 400;
  color: #20123a;
}
.ext-btns {
  margin-left: 117px;
}
.account {
  width: 16px;
  height: 16px;
  border-radius: 50%;
  background: #592acb;
  color: #fff;
  font-size: 10px;
  font-weight: 700;
  line-height: 16px;
}
.bookmarks {
  display: flex;
  align-items: center;
  gap: 12px;
  height: 28px;
  padding: 0 12px;
  white-space: nowrap;
}
.bookmark {
  display: flex;
  align-items: center;
  gap: 4px;
}
.bookmark span {
  padding-top: 1px;
}
.bookmark.long span {
  width: 128px;
}
.bookmark.mobile {
  gap: 0;
  margin-left: auto;
}

/* admin shell */
.app {
  display: flex;
  flex: 1;
  min-height: 0;
}
.side {
  flex: none;
  width: 110px;
  background: #3c3f51;
  color: #d6d7dc;
}
.brand {
  height: 50px;
  padding-left: 15px;
  font-size: 18px;
  line-height: 50px;
  color: #9c9ea8;
}
.side-item {
  display: flex;
  align-items: center;
  gap: 16px;
  height: 50px;
  padding: 2px 0 0 14px;
}
.side-item.active {
  background: #333646;
  color: #fff;
}
.fa {
  width: 19px;
  height: 18px;
  fill: currentColor;
}
.side-foot {
  padding: 14px 0 10px;
  border-top: 1px solid #2e3140;
}
.sub {
  flex: none;
  width: 120px;
  background: #f5f7f7;
  border-right: 1px solid #e7e7eb;
}
.sub-title {
  display: flex;
  align-items: center;
  gap: 13px;
  height: 51px;
  padding: 2px 0 0 19px;
  background: #fff;
  border-bottom: 1px solid #e7e7eb;
  font-size: 16px;
  color: #999;
}
.cal {
  width: 12px;
  height: 13px;
  fill: #999;
}
.sub-group {
  display: flex;
  align-items: center;
  justify-content: space-between;
  width: 100%;
  height: 41px;
  padding: 0 15px;
  border: 0;
  background: #fff;
  color: #999;
}
.chev {
  width: 10px;
  height: 6px;
}
.sub-item {
  display: block;
  height: 39px;
  padding-left: 30px;
  line-height: 41px;
  color: #222;
}
.sub-item.active {
  background: #3296fa;
  color: #fff;
}
.work {
  display: flex;
  flex-direction: column;
  flex: 1;
  min-width: 0;
}
.topbar {
  display: flex;
  align-items: center;
  justify-content: flex-end;
  flex: none;
  height: 51px;
  padding: 2px 46px 0 0;
  background: #fff;
  border-bottom: 1px solid #e7e7eb;
  color: #444;
}
.top-link {
  display: flex;
  align-items: center;
  margin-right: 51px;
}
.top-link svg {
  fill: #444;
}
.caret {
  margin-left: 2px;
  border: 4px solid transparent;
  border-top-color: #444;
  border-bottom: 0;
}
.scroll {
  display: flex;
  align-items: flex-start;
  flex: 1;
  min-height: 0;
  overflow: hidden;
  background: #f0f0f1;
}
.page {
  flex: 1;
  min-width: 0;
  margin: 10px;
  padding: 30px;
  border: 1px solid #e7e7eb;
  background: #fff;
}
.crumb {
  display: flex;
  gap: 7px;
  height: 43px;
  padding: 11px 15px;
  border: 1px solid #faebcc;
  border-bottom-width: 2px;
  border-radius: 4px;
  background: #fcf8e3;
  color: #8a6d3b;
  box-shadow: 0 1px 1px rgba(0, 0, 0, 0.05);
}
.panel {
  margin-top: 20px;
  border: 1px solid #ddd;
  border-radius: 4px;
  box-shadow: 0 1px 1px rgba(0, 0, 0, 0.05);
}
.panel-head {
  padding: 10px 15px;
  font-size: 14px;
  background: #f5f5f5;
  border-bottom: 1px solid #ddd;
  border-radius: 3px 3px 0 0;
}
.panel.info {
  border-color: #bce8f1;
}
.info .panel-head {
  padding: 11px 15px 9px;
  background: #d9edf7;
  border-color: #bce8f1;
  color: #31708f;
}
.bar {
  display: flex;
  gap: 5px;
}
.panel-body {
  padding: 15px;
}
.filter {
  display: grid;
  grid-template-columns: 2fr 9fr 9fr 4fr;
  align-items: center;
  padding: 15px 0 45px;
  color: #222;
}
.filter label {
  padding-top: 2px;
  text-align: right;
}
.cell {
  padding: 0 15px;
}
.wide {
  grid-column: 2 / 4;
}
.wide + .row2 {
  grid-column: 1;
}
.row2 {
  margin-top: 30px;
}
.field {
  display: block;
  width: 100%;
  height: 34px;
  padding: 2px 14px 0;
  border: 1px solid #e7e7eb;
  border-radius: 0;
  background: #fff;
  appearance: none;
  font-weight: 500;
}
.pick {
  position: relative;
}
.arrow {
  position: absolute;
  top: 1px;
  right: 1px;
  bottom: 1px;
  display: flex;
  align-items: center;
  justify-content: center;
  width: 35px;
  border-left: 1px solid #e7e7eb;
  pointer-events: none;
}
.arrow::after {
  content: '';
  border: 5px solid transparent;
  border-top: 6px solid #999;
  border-bottom: 0;
}
.btn {
  display: flex;
  align-items: center;
  justify-content: center;
  gap: 4px;
  height: 34px;
  padding: 2px 12px 0;
  border: 1px solid #e7e7eb;
  border-radius: 2px;
  background: #fff;
  color: #fff;
  white-space: nowrap;
}
.btn.white { color: #333; }
.btn.orange { background: #f0ad4e; border-color: #eea236; }
.btn.blue { background: #3296fa; border-color: #1987f5; }
.btn.green { background: #099302; border-color: #cfe0cf; }
.btn.red { background: #c94142; border-color: #b20e10; }
.btn.small {
  height: 30px;
  padding: 1px 10px 0;
  font-size: 12px;
}
.btn.count {
  width: 100px;
  color: #333;
}
.group {
  display: flex;
  gap: 4px;
}
table {
  width: 100%;
  border-collapse: separate;
  border-spacing: 0;
  table-layout: fixed;
}
.w50 { width: 50px; }
.w70 { width: 70px; }
.w120 { width: 120px; }
.w145 { width: 145px; }
.w240 { width: 240px; }
th {
  padding: 9px 8px 7px;
  border-bottom: 2px solid #ddd;
  text-align: left;
  font-weight: 700;
  white-space: nowrap;
}
td {
  height: 47px;
  padding: 8px 0 8px 8px;
  border-bottom: 1px solid #ddd;
  vertical-align: top;
}
.hover td {
  background: #f4f5f9;
}
.title {
  line-height: 22px;
  white-space: pre-wrap;
}
.cat { color: #a94442; }
.subcat { color: #31708f; }
.tick {
  display: block;
  width: 14px;
  height: 14px;
  margin-top: 4px;
  appearance: none;
  border: 2px solid #8f8f9d;
  border-radius: 2px;
  background: #fff;
}
.scrollbar {
  display: flex;
  flex-direction: column;
  align-self: stretch;
  flex: none;
  width: 17px;
  background: #f0f0f0;
}
.sb-arrow {
  width: 17px;
  height: 17px;
}
.track {
  flex: 1;
}
.thumb {
  height: 434px;
  background: #cdcdcd;
}

/* windows task bar */
.taskbar {
  display: flex;
  align-items: stretch;
  flex: none;
  height: 40px;
  background: linear-gradient(90deg, #213a44, #20374a 60%, #1b2642);
  color: #fff;
  font-size: 12px;
}
.task {
  position: relative;
  width: 49px;
}
.task::after {
  content: '';
  position: absolute;
  right: 4px;
  bottom: 0;
  left: 5px;
  height: 2px;
  background: #76b9ed;
}
.task.start {
  width: 49px;
  padding-right: 1px;
}
.task.start::after {
  display: none;
}
.task.active {
  background: #4b6069;
}
.task.active::after {
  right: 0;
  left: 0;
}
.task.stacked::after {
  background: linear-gradient(90deg, #76b9ed 80%, #5682a8 80%);
}
.tray {
  display: flex;
  align-items: center;
  gap: 8px;
  margin-left: auto;
}
.ime {
  margin-left: 2px;
}
.clock {
  width: 72px;
  margin: 0 22px 0 18px;
  padding-bottom: 2px;
  text-align: center;
  line-height: 17px;
}
.notice {
  position: relative;
  width: 22px;
}
.badge {
  position: absolute;
  top: 8px;
  left: 8px;
  width: 16px;
  height: 14px;
  background: #e3000f;
  font-size: 10px;
  line-height: 14px;
  text-align: center;
}
.desk {
  align-self: stretch;
  width: 5px;
  border-left: 1px solid #56617a;
}
</style>
